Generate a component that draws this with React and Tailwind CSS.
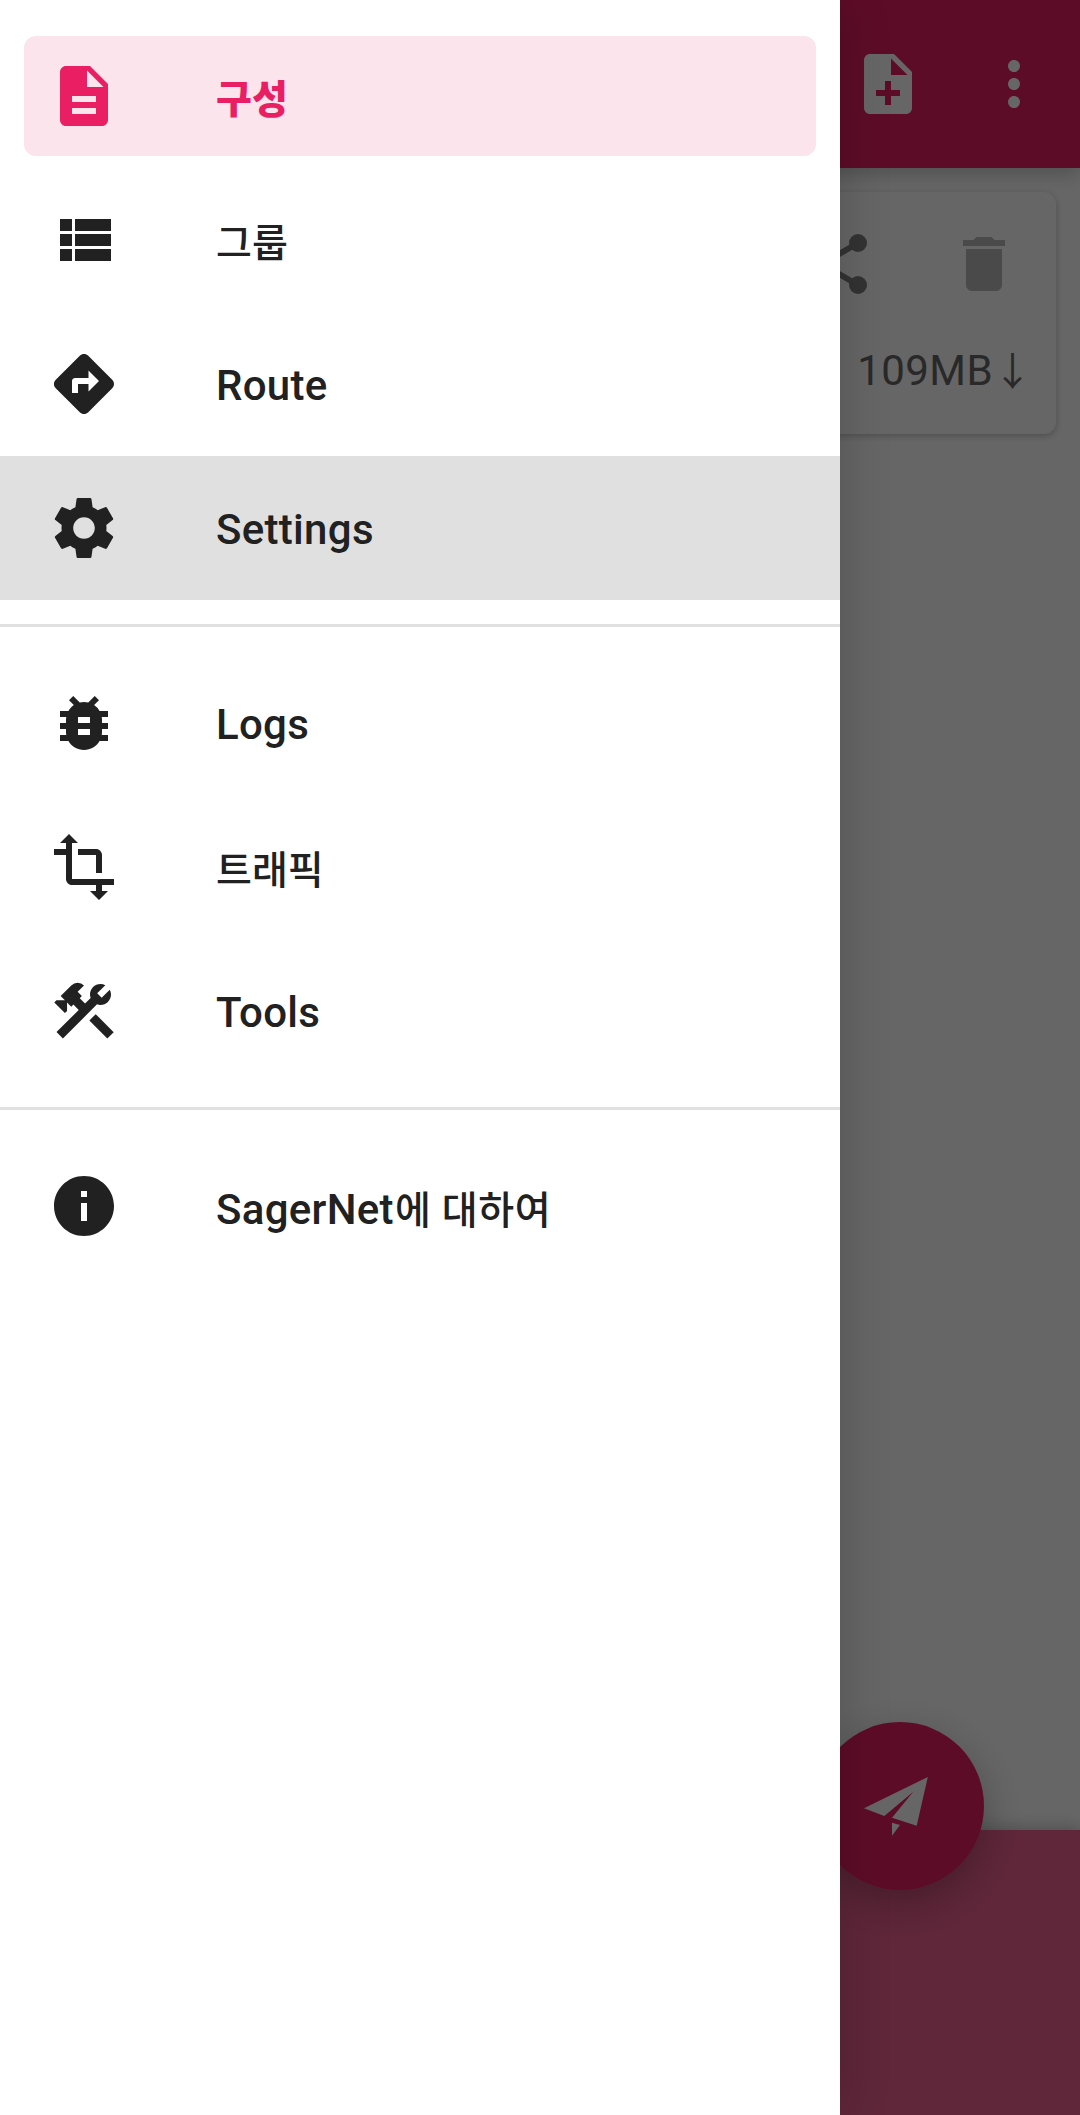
import React from "react";
import {
  MdBugReport,
  MdConstruction,
  MdDelete,
  MdDescription,
  MdDirections,
  MdInfo,
  MdMoreVert,
  MdNoteAdd,
  MdTransform,
} from "react-icons/md";

function ListIcon({ className }) {
  return (
    <svg viewBox="0 0 24 24" className={className} fill="currentColor">
      <path d="M4 14h4v-4H4v4zm0 5h4v-4H4v4zM4 9h4V5H4v4zm5 5h12v-4H9v4zm0 5h12v-4H9v4zM9 5v4h12V5H9z" />
    </svg>
  );
}

function GearIcon({ className }) {
  return (
    <svg viewBox="0 0 24 24" className={className} fill="currentColor">
      <path d="M19.43 12.98c.04-.32.07-.64.07-.98s-.03-.66-.07-.98l2.11-1.65c.19-.15.24-.42.12-.64l-2-3.46c-.12-.22-.39-.3-.61-.22l-2.49 1c-.52-.4-1.08-.73-1.69-.98l-.38-2.65C14.46 2.18 14.25 2 14 2h-4c-.25 0-.46.18-.49.42l-.38 2.65c-.61.25-1.17.59-1.69.98l-2.49-1c-.23-.09-.49 0-.61.22l-2 3.46c-.13.22-.07.49.12.64l2.11 1.65c-.04.32-.07.65-.07.98s.03.66.07.98l-2.11 1.65c-.19.15-.24.42-.12.64l2 3.46c.12.22.39.3.61.22l2.49-1c.52.4 1.08.73 1.69.98l.38 2.65c.03.24.24.42.49.42h4c.25 0 .46-.18.49-.42l.38-2.65c.61-.25 1.17-.59 1.69-.98l2.49 1c.23.09.49 0 .61-.22l2-3.46c.12-.22.07-.49-.12-.64l-2.11-1.65zM12 15.6c-1.98 0-3.6-1.62-3.6-3.6s1.62-3.6 3.6-3.6 3.6 1.62 3.6 3.6-1.62 3.6-3.6 3.6z" />
    </svg>
  );
}

function ShareIcon() {
  return (
    <svg viewBox="0 0 24 24" className="size-[72px]" fill="currentColor">
      <path d="M18 5L6 12l12 7" fill="none" stroke="currentColor" strokeWidth="2" />
      <circle cx="18" cy="5" r="3" />
      <circle cx="6" cy="12" r="3" />
      <circle cx="18" cy="19" r="3" />
    </svg>
  );
}

function PlaneIcon() {
  return (
    <svg viewBox="0 0 72 72" className="size-[72px]" fill="currentColor">
      <path d="M0 38.3L63.8 7 52.7 55.7 28 47.7 49.3 21.7 20.3 46z" />
      <path d="M28 52.7l8 2.3-8 10.7z" />
    </svg>
  );
}

const groups = [
  [
    { korean: "구성", icon: MdDescription, selected: true },
    { korean: "그룹", icon: ListIcon },
    { latin: "Route", icon: MdDirections },
    { latin: "Settings", icon: GearIcon, pressed: true },
  ],
  [
    { latin: "Logs", icon: MdBugReport },
    { korean: "트래픽", icon: MdTransform },
    { latin: "Tools", icon: MdConstruction },
  ],
  [{ latin: "SagerNet", korean: "에 대하여", icon: MdInfo }],
];

function Label({ latin, korean }) {
  // Hangul sits a little lower than Roboto in the row
  return (
    <span
      className={
        korean
          ? "ml-24 flex items-baseline pt-[8px] leading-[60px] whitespace-pre"
          : "ml-24 flex items-baseline pt-[3px] leading-[60px] whitespace-pre"
      }
    >
      {latin}
      {korean && (
        <span className={latin ? "ml-px text-[39px] tracking-[0.6px]" : "text-[39px] tracking-normal"}>
          {korean}
        </span>
      )}
    </span>
  );
}

function NavItem({ latin, korean, icon: Icon, selected, pressed }) {
  if (selected) {
    return (
      <div className="mx-6 my-3 flex h-[120px] items-center rounded-xl bg-[#fbe4eb] pl-6 font-black text-[#e91e63]">
        <Icon className="size-[72px] shrink-0" />
        <Label latin={latin} korean={korean} />
      </div>
    );
  }

  return (
    <div className={pressed ? "flex h-36 items-center bg-[#e0e0e0] pl-12" : "flex h-36 items-center pl-12"}>
      <Icon className="size-[72px] shrink-0" />
      <Label latin={latin} korean={korean} />
    </div>
  );
}

function MainScreen() {
  return (
    <div className="flex h-full flex-col bg-white">
      {/* Toolbar */}
      <div className="z-10 flex h-[168px] shrink-0 items-center justify-end gap-[54px] bg-[#e91e63] pr-[30px] text-white shadow-[0_6px_18px_rgba(0,0,0,0.22)]">
        <MdNoteAdd className="size-[72px]" />
        <MdMoreVert className="size-[72px]" />
      </div>

      {/* Profile card */}
      <div className="mx-6 mt-6 flex h-[242px] flex-col items-end rounded-xl bg-white pt-9 shadow-[0_2px_7px_rgba(0,0,0,0.24)]">
        <div className="flex gap-[72px] pr-9">
          <span className="text-[#818181]">
            <ShareIcon />
          </span>
          <MdDelete className="size-[72px] text-[#bababa]" />
        </div>
        <div className="mt-[41px] flex pr-[24px] leading-[60px] tracking-[0.4px] text-[#666]">
          109MB<span className="pt-px text-[39px] tracking-normal">↓</span>
        </div>
      </div>

      {/* Bottom bar */}
      <div className="relative mt-auto h-[285px] bg-[#f06292] shadow-[0_-3px_14px_rgba(0,0,0,0.22)]">
        <div className="absolute -top-[108px] right-24 flex size-[168px] items-center justify-center rounded-full bg-[#e91e63] text-white shadow-[0_14px_42px_rgba(0,0,0,0.28)]">
          <PlaneIcon />
        </div>
      </div>
    </div>
  );
}

export default function App() {
  return (
    <div className="relative h-[2115px] w-[1080px] overflow-hidden font-[Roboto,'Noto_Sans_CJK_KR',sans-serif] text-[42px]">
      <MainScreen />

      {/* Scrim and drawer */}
      <div className="absolute inset-0 z-20 bg-black/60">
        <nav className="h-full w-[840px] bg-white pt-6 font-medium tracking-[0.3px] text-[#212121] shadow-[0_0_48px_rgba(0,0,0,0.2)]">
          {groups.map((items, i) => (
            <div key={i} className={i > 0 ? "mt-6 border-t-[3px] border-[#e0e0e0] pt-6" : ""}>
              {items.map((item) => (
                <NavItem key={item.latin || item.korean} {...item} />
              ))}
            </div>
          ))}
        </nav>
      </div>
    </div>
  );
}
